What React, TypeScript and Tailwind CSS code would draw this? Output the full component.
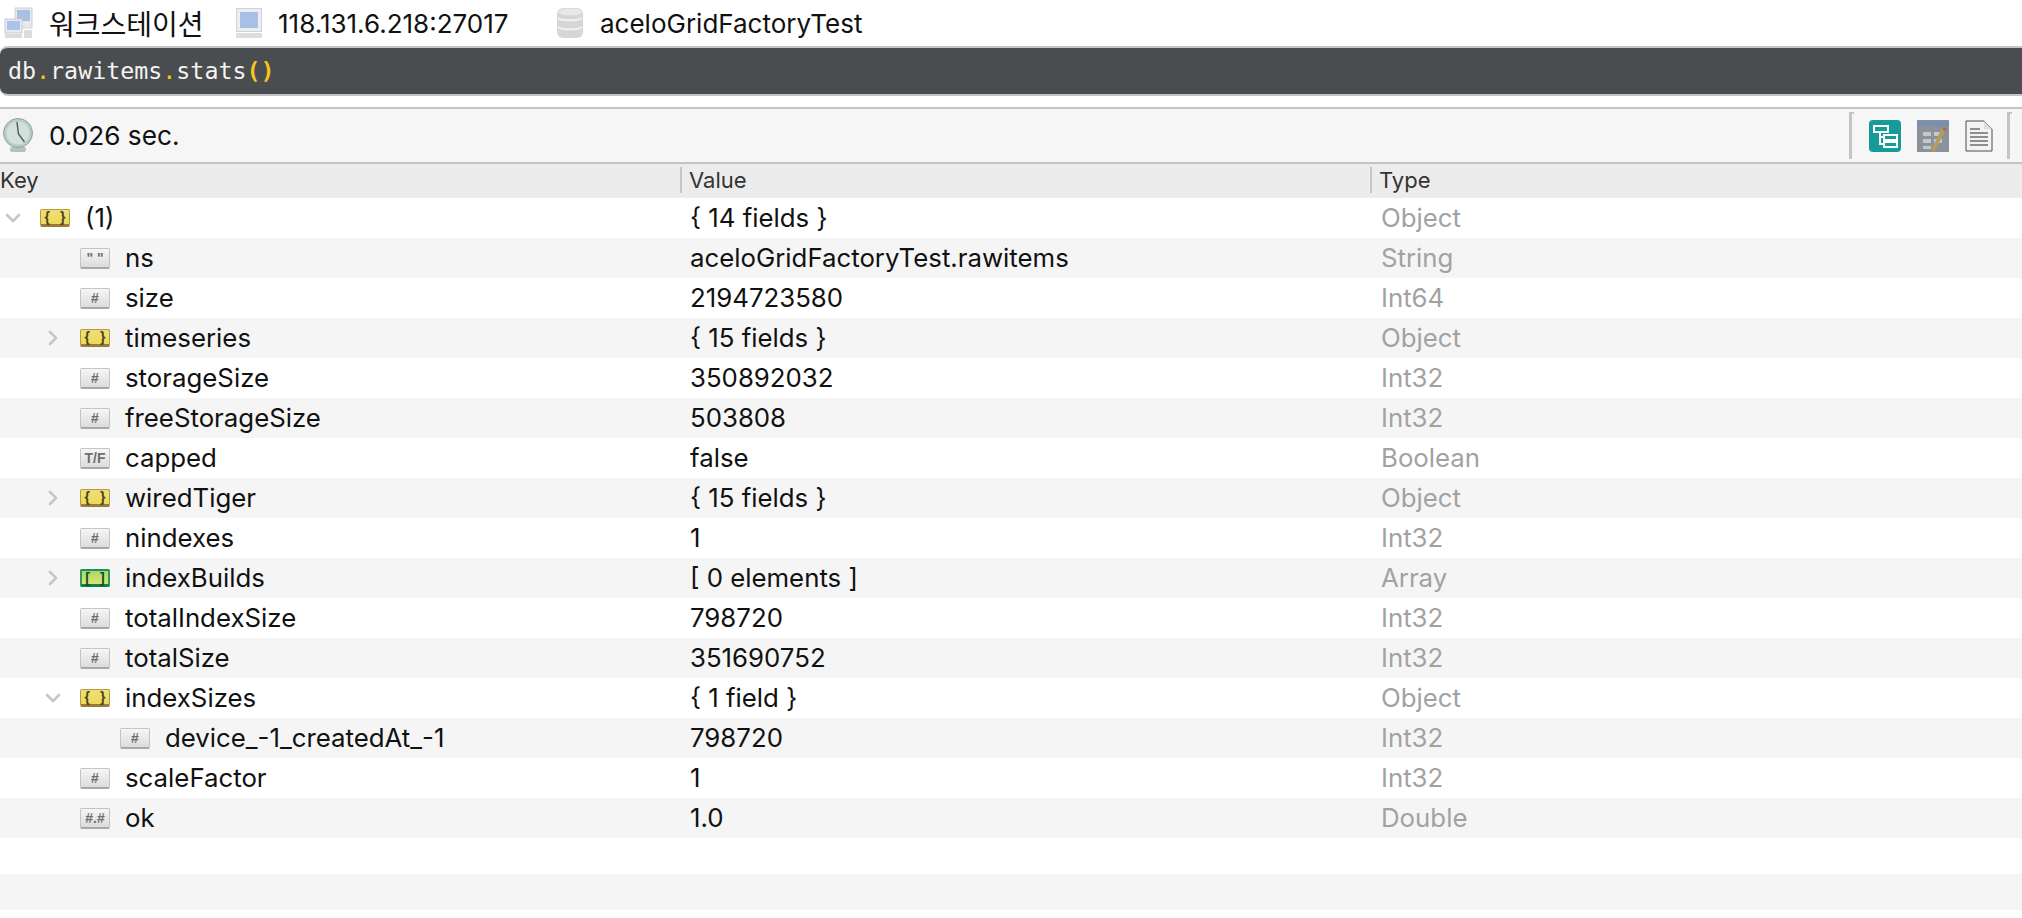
import type { ReactNode } from "react";
import { ChevronDown, ChevronRight } from "lucide-react";

type Kind = "object" | "string" | "number" | "bool" | "array" | "double";

type Row = {
  key: string;
  value: string;
  type: string;
  kind: Kind;
  level: 0 | 1 | 2;
  toggle?: "open" | "closed";
};

const rows: Row[] = [
  { key: "(1)", value: "{ 14 fields }", type: "Object", kind: "object", level: 0, toggle: "open" },
  { key: "ns", value: "aceloGridFactoryTest.rawitems", type: "String", kind: "string", level: 1 },
  { key: "size", value: "2194723580", type: "Int64", kind: "number", level: 1 },
  { key: "timeseries", value: "{ 15 fields }", type: "Object", kind: "object", level: 1, toggle: "closed" },
  { key: "storageSize", value: "350892032", type: "Int32", kind: "number", level: 1 },
  { key: "freeStorageSize", value: "503808", type: "Int32", kind: "number", level: 1 },
  { key: "capped", value: "false", type: "Boolean", kind: "bool", level: 1 },
  { key: "wiredTiger", value: "{ 15 fields }", type: "Object", kind: "object", level: 1, toggle: "closed" },
  { key: "nindexes", value: "1", type: "Int32", kind: "number", level: 1 },
  { key: "indexBuilds", value: "[ 0 elements ]", type: "Array", kind: "array", level: 1, toggle: "closed" },
  { key: "totalIndexSize", value: "798720", type: "Int32", kind: "number", level: 1 },
  { key: "totalSize", value: "351690752", type: "Int32", kind: "number", level: 1 },
  { key: "indexSizes", value: "{ 1 field }", type: "Object", kind: "object", level: 1, toggle: "open" },
  { key: "device_-1_createdAt_-1", value: "798720", type: "Int32", kind: "number", level: 2 },
  { key: "scaleFactor", value: "1", type: "Int32", kind: "number", level: 1 },
  { key: "ok", value: "1.0", type: "Double", kind: "double", level: 1 },
];

const indent = { 0: "pl-0", 1: "pl-[40px]", 2: "pl-[80px]" };

function TypeIcon({ kind }: { kind: Kind }) {
  if (kind === "object" || kind === "array") {
    const green = kind === "array";
    return (
      <span
        className={
          green
            ? "flex h-[18px] w-[30px] items-center justify-center gap-[10px] rounded-[2px] border-x-2 border-t-[2px] border-b-[3px] border-x-[#2f9a5c] border-t-[#1e8f5a] border-b-[#0f7f50] bg-gradient-to-b from-[#a8d86a] to-[#dde26e] font-['Liberation_Sans',sans-serif] text-[14px] leading-none font-bold text-[#0d4f2e]"
            : "flex h-[18px] w-[30px] items-center justify-center gap-[10px] rounded-[2px] border-x border-t border-b-[3px] border-x-[#b89a3e] border-t-[#b89a3e] border-b-[#9c7a3a] bg-gradient-to-b from-[#f0de78] to-[#ecd95c] font-['Liberation_Sans',sans-serif] text-[14px] leading-none font-bold text-[#4a4320]"
        }
      >
        <span>{green ? "[" : "{"}</span>
        <span>{green ? "]" : "}"}</span>
      </span>
    );
  }
  const glyph = { string: "\" \"", number: "#", bool: "T/F", double: "#.#" }[kind];
  return (
    <span className="flex h-[21px] w-[30px] items-center justify-center rounded-[2px] border border-b-2 border-[#c4c4c4] border-b-[#a8a8a8] bg-gradient-to-b from-[#f6f6f6] to-[#dcdcdc] font-['Liberation_Sans',sans-serif] text-[14px] leading-none font-bold text-[#6e6e6e]">
      {glyph}
    </span>
  );
}

function TreeRow({ row, odd }: { row: Row; odd: boolean }) {
  return (
    <div className={odd ? "flex h-[40px] items-center bg-[#f5f5f5]" : "flex h-[40px] items-center bg-white"}>
      <div className={`flex w-[690px] items-center ${indent[row.level]}`}>
        <span className="flex w-[40px] shrink-0 items-center justify-center pr-[14px]">
          {row.toggle === "open" && <ChevronDown size={24} strokeWidth={2.6} className="text-[#c6c6c6]" />}
          {row.toggle === "closed" && <ChevronRight size={24} strokeWidth={2.6} className="text-[#c6c6c6]" />}
        </span>
        <TypeIcon kind={row.kind} />
        <span className="ml-[15px]">{row.key}</span>
      </div>
      <div className="w-[691px]">{row.value}</div>
      <div className="text-[#a2a2a2]">{row.type}</div>
    </div>
  );
}

function WorkstationIcon() {
  return (
    <svg width="30" height="32" viewBox="0 0 30 32">
      <rect x="12" y="1" width="17" height="20" fill="#e6e8ec" stroke="#cfd2d6" />
      <rect x="14" y="3" width="13" height="11" fill="#a9c0e4" />
      <rect x="2" y="12" width="17" height="14" fill="#e8eaee" stroke="#c8cbd0" />
      <rect x="4" y="14" width="13" height="9" fill="#a9c4ea" />
      <rect x="2" y="27" width="17" height="4" fill="#dcdcdc" />
      <rect x="21" y="23" width="8" height="8" fill="#dcdcdc" />
    </svg>
  );
}

function MonitorIcon() {
  return (
    <svg width="26" height="30" viewBox="0 0 26 30">
      <rect x="0.5" y="0.5" width="25" height="23" fill="#eceef1" stroke="#cfd1d4" />
      <rect x="4" y="4" width="18" height="16" fill="#a9c0e6" />
      <rect x="0" y="25" width="26" height="5" fill="#dedede" />
    </svg>
  );
}

function DatabaseIcon() {
  return (
    <svg width="28" height="32" viewBox="0 0 28 32">
      <rect x="1" y="1" width="26" height="30" rx="6" fill="#d6d6d6" />
      <ellipse cx="14" cy="5" rx="12" ry="3.5" fill="#e8e8e8" />
      <path d="M2 11c3 3 21 3 24 0M2 20c3 3 21 3 24 0" fill="none" stroke="#f0f0f0" strokeWidth="2" />
    </svg>
  );
}

function ClockIcon() {
  return (
    <svg width="32" height="34" viewBox="0 0 32 34">
      <rect x="8" y="29" width="16" height="5" rx="2" fill="#b8c0bc" />
      <circle cx="16" cy="15" r="14.5" fill="#b7cdc5" stroke="#8fa29b" />
      <circle cx="16" cy="15" r="11.5" fill="#d3e0db" />
      <path d="M15 4l1.5 12 6 8" fill="none" stroke="#56625e" strokeWidth="1.5" />
    </svg>
  );
}

function TreeViewIcon() {
  return (
    <svg width="32" height="32" viewBox="0 0 32 32">
      <rect width="32" height="32" rx="4" fill="#169c98" />
      <path d="M11 11v13h5M11 17h5" fill="none" stroke="#fff" strokeWidth="2" />
      <rect x="5" y="6" width="14" height="6" fill="#169c98" stroke="#fff" strokeWidth="2" />
      <rect x="15" y="15" width="13" height="5" fill="#169c98" stroke="#fff" strokeWidth="2" />
      <rect x="15" y="22" width="13" height="5" fill="#169c98" stroke="#fff" strokeWidth="2" />
    </svg>
  );
}

function TableViewIcon() {
  return (
    <svg width="32" height="32" viewBox="0 0 32 32">
      <rect width="32" height="32" fill="#8b9299" />
      <rect y="1" width="32" height="5" fill="#7a8fb0" />
      <path d="M6 12h8v4H6zM17 12h8v4h-8zM6 19h8v4H6zM17 19h8v4h-8zM6 26h8v3H6z" fill="#c3c8cc" />
      <path d="M27 8L16 31" stroke="#b89a5a" strokeWidth="4" />
      <path d="M26 8l3 2" stroke="#a8686a" strokeWidth="3" />
    </svg>
  );
}

function TextViewIcon() {
  return (
    <svg width="28" height="32" viewBox="0 0 28 32">
      <path d="M1 1h18l8 8v22H1z" fill="#f3f3f3" stroke="#4c4c4c" strokeWidth="1" />
      <path d="M19 1v8h8z" fill="#dcdcdc" />
      <path d="M5 9h10M5 13h18M5 17h18M5 21h18M5 25h18" stroke="#8e8e8e" strokeWidth="2" />
    </svg>
  );
}

function ToolbarSeparator() {
  return <span className="h-[47px] w-[5px] border-t-2 border-l-[3px] border-[#c4c4c4]" />;
}

function Crumb({ icon, label, className }: { icon: ReactNode; label: string; className: string }) {
  return (
    <div className={`flex items-center ${className}`}>
      {icon}
      <span>{label}</span>
    </div>
  );
}

export default function App() {
  return (
    <div className="h-[918px] w-[2022px] overflow-hidden bg-white font-['Inter',sans-serif] text-[25.8px] text-[#111]">
      <div className="flex h-[46px] items-center pl-[3px]">
        <Crumb icon={<WorkstationIcon />} label="워크스테이션" className="w-[233px] gap-[16px] font-['Noto_Sans_CJK_KR',sans-serif] text-[28px]" />
        <Crumb icon={<MonitorIcon />} label="118.131.6.218:27017" className="w-[320px] gap-[16px] text-[26px]" />
        <Crumb icon={<DatabaseIcon />} label="aceloGridFactoryTest" className="gap-[16px] text-[26px]" />
      </div>

      <div className="flex h-[50px] items-center rounded-l-[8px] border-y-2 border-[#c4c4c4] bg-[#4a4d50] pl-[8px] font-['DejaVu_Sans_Mono',monospace] text-[23.3px] text-[#f4f4f4]">
        db<span className="text-[#f9c31e]">.</span>rawitems<span className="text-[#f9c31e]">.</span>stats<span className="font-bold text-[#f9c31e]">()</span>
      </div>

      <div className="h-[11px]" />

      <div className="flex h-[57px] items-center justify-between border-y-2 border-[#c4c4c4] bg-[#f6f6f6] pl-[2px]">
        <div className="flex items-center gap-[15px]">
          <ClockIcon />
          <span className="text-[26.2px]">0.026 sec.</span>
        </div>
        <div className="flex items-center pr-[10px]">
          <ToolbarSeparator />
          <div className="flex items-center gap-[16px] pr-[14px] pl-[15px]">
            <TreeViewIcon />
            <TableViewIcon />
            <TextViewIcon />
          </div>
          <ToolbarSeparator />
        </div>
      </div>

      <div className="flex h-[34px] items-center bg-[#ececec] pb-[2px] text-[22px] text-[#333]">
        <div className="flex h-[26px] w-[680px] items-center">Key</div>
        <div className="flex h-[26px] w-[690px] items-center border-l-2 border-[#c6c6c6] pl-[7px]">Value</div>
        <div className="flex h-[26px] items-center border-l-2 border-[#c6c6c6] pl-[7px]">Type</div>
      </div>

      {rows.map((row, index) => (
        <TreeRow key={row.key} row={row} odd={index % 2 === 1} />
      ))}

      <div className="h-[36px] bg-white" />
      <div className="h-[36px] bg-[#f5f5f5]" />
    </div>
  );
}
